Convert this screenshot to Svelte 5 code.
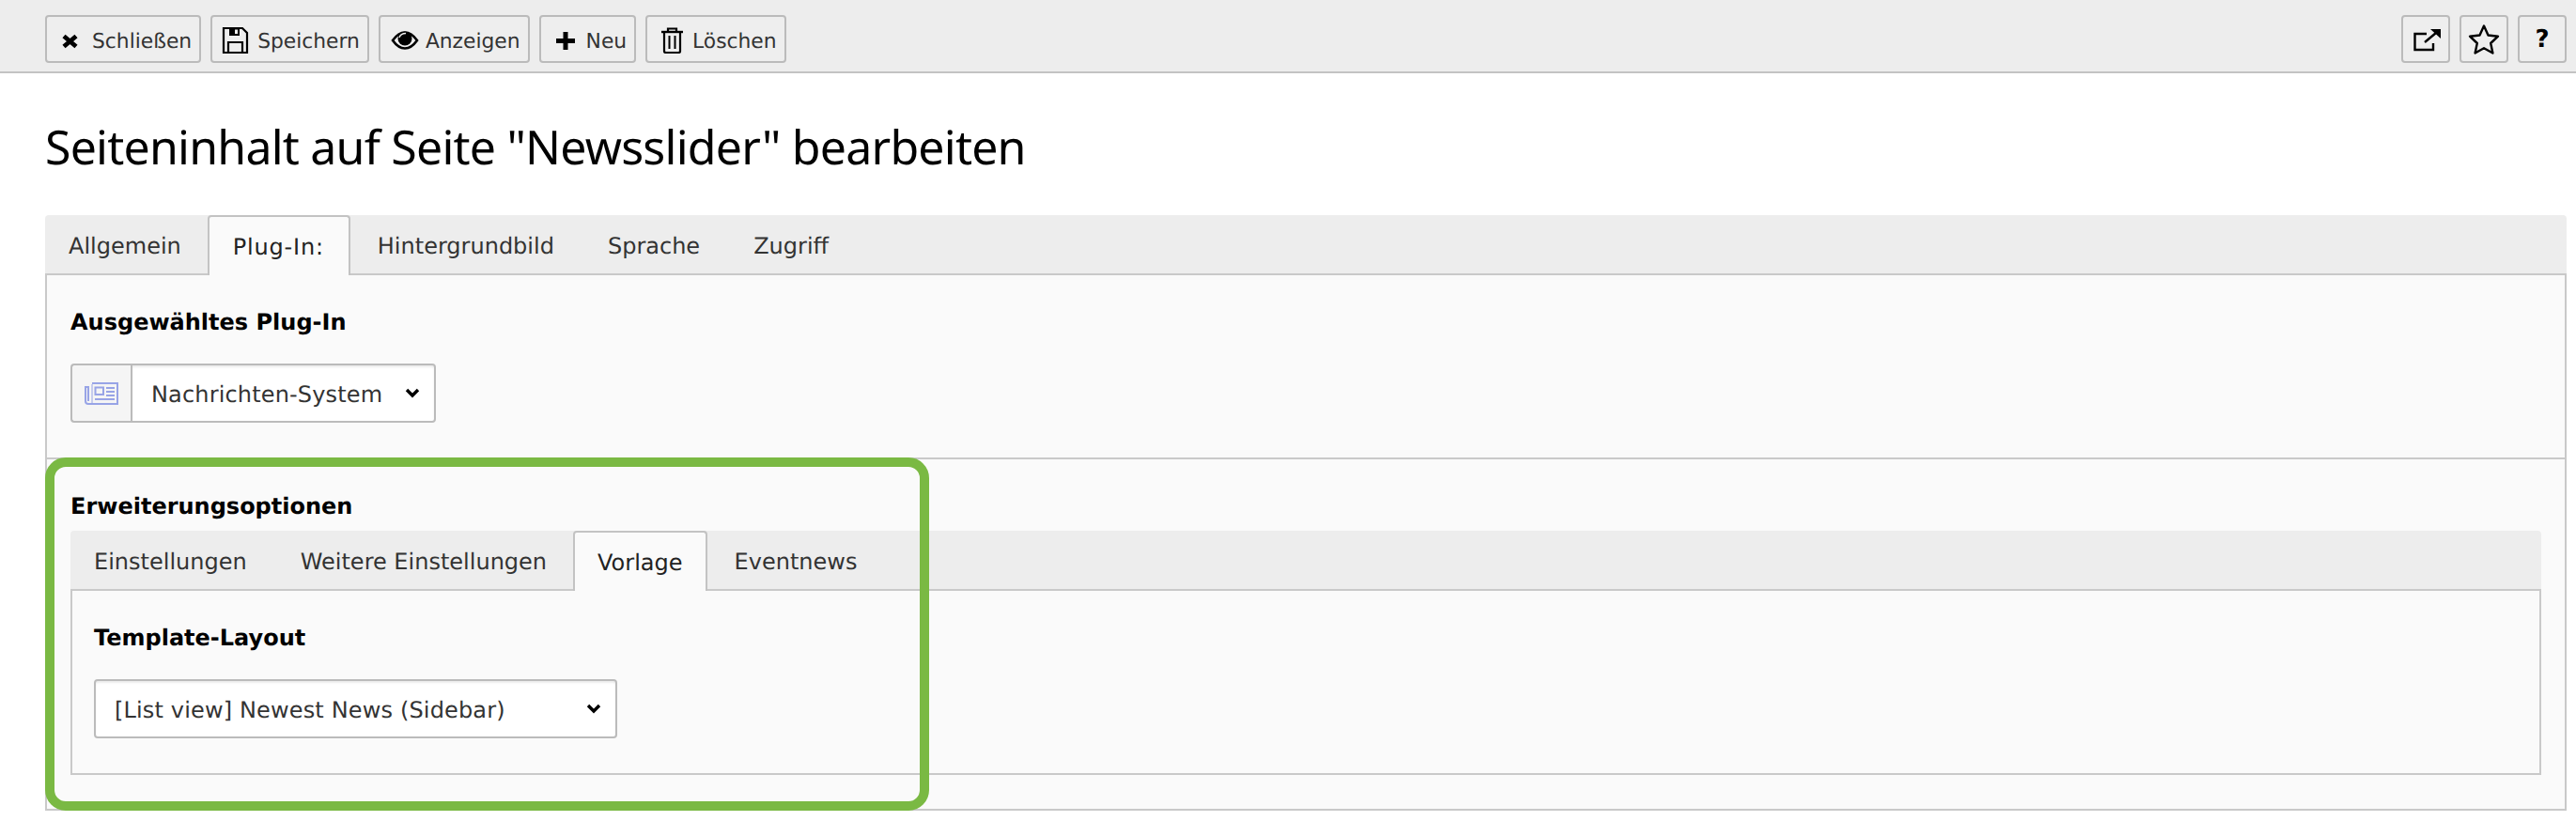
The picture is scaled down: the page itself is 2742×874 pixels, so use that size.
<script lang="ts">
	const leftActions = ['close', 'save', 'view', 'new', 'delete'];
	const labels: Record<string, string> = {
		close: 'Schließen',
		save: 'Speichern',
		view: 'Anzeigen',
		new: 'Neu',
		delete: 'Löschen'
	};
	const mainTabs = ['Allgemein', 'Plug-In:', 'Hintergrundbild', 'Sprache', 'Zugriff'];
	const subTabs = ['Einstellungen', 'Weitere Einstellungen', 'Vorlage', 'Eventnews'];
</script>

<div class="toolbar">
	<div class="group">
		{#each leftActions as action}
			<button class="btn" type="button">
				<svg class="icon" viewBox="0 0 32 32" width="32" height="32">
					{#if action === 'close'}
						<path d="M8 12.500 21 23.500M21 12.500 8 23.500" fill="none" stroke="#000" stroke-width="4.800" />
					{:else if action === 'save'}
						<path d="M2 4H22L27 9V30H2Z" fill="none" stroke="#000" stroke-width="2.200" />
						<path d="M8 4H19V12H8Z" fill="#000" />
						<path d="M14 5.500H17V10H14Z" fill="#eee" />
						<path d="M7 30V19H22V30" fill="none" stroke="#000" stroke-width="2.200" />
					{:else if action === 'view'}
						<path d="M3 17C8 10 12 8.500 16 8.500S24 10 29 17C24 24 20 25.500 16 25.500S8 24 3 17Z" fill="none" stroke="#000" stroke-width="2.600" />
						<circle cx="16" cy="15" r="7.500" fill="#000" />
						<path d="M10 14C11 11 14 9.500 17 9.500" fill="none" stroke="#eee" stroke-width="1.400" />
					{:else if action === 'new'}
						<path d="M6 17.500H26M16 8V27" fill="none" stroke="#000" stroke-width="5" />
					{:else}
						<path d="M5 8H28" fill="none" stroke="#000" stroke-width="2.400" />
						<path d="M12 8V4.500H21V8" fill="none" stroke="#000" stroke-width="2.200" />
						<path d="M8 8V28.500Q8 30 10 30H23Q25 30 25 28.500V8" fill="none" stroke="#000" stroke-width="2.200" />
						<path d="M13.500 12V26M19.500 12V26" fill="none" stroke="#000" stroke-width="2" />
					{/if}
				</svg>
				<span>{labels[action]}</span>
			</button>
		{/each}
	</div>
	<div class="group">
		<button class="btn square" type="button" aria-label="Neues Fenster">
			<svg viewBox="0 0 32 32" width="32" height="32">
				<path d="M24 20V27H4.500V10H17" fill="none" stroke="#000" stroke-width="2.400" />
				<path d="M15 19 27 9" fill="none" stroke="#000" stroke-width="2.400" />
				<path d="M21 5H32V15Z" fill="#000" />
			</svg>
		</button>
		<button class="btn square" type="button" aria-label="Lesezeichen">
			<svg viewBox="0 0 36 36" width="36" height="36">
				<path d="M18 3.500 22.500 13.500 33 14.700 25.200 22 27.400 32.500 18 27.200 8.600 32.500 10.800 22 3 14.700 13.500 13.500Z" fill="none" stroke="#000" stroke-width="2.400" stroke-linejoin="round" />
			</svg>
		</button>
		<button class="btn square help" type="button">?</button>
	</div>
</div>

<main class="page">
	<h1>Seiteninhalt auf Seite "Newsslider" bearbeiten</h1>

	<div class="tabs">
		{#each mainTabs as tab}
			<span class="tab" class:active={tab === 'Plug-In:'} class:spaced={tab === 'Plug-In:'}>{tab}</span>
		{/each}
	</div>

	<div class="panel">
		<section class="section first">
			<h3>Ausgewähltes Plug-In</h3>
			<div class="select-group">
				<span class="addon">
					<svg viewBox="0 0 36 24" width="36" height="24">
						<path d="M8 1H35V23H4Q1 23 1 20V5H4V20" fill="none" stroke="#98a4e6" stroke-width="2" />
						<path d="M8 2V22" fill="none" stroke="#98a4e6" stroke-width="1" />
						<path d="M11.500 5.500H20V13H11.500Z" fill="none" stroke="#98a4e6" stroke-width="2" />
						<path d="M23 6H32M23 10H32M23 14H32M11 18H32" fill="none" stroke="#98a4e6" stroke-width="2" />
					</svg>
				</span>
				<span class="select-wrap plugin">
					<select>
						<option>Nachrichten-System</option>
					</select>
					<svg class="chevron" viewBox="0 0 16 11" width="16" height="11">
						<path d="M2 2 8 8 14 2" fill="none" stroke="#000" stroke-width="3.400" />
					</svg>
				</span>
			</div>
		</section>

		<section class="section second">
			<h3 class="options-title">Erweiterungsoptionen</h3>
			<div class="tabs">
				{#each subTabs as tab}
					<span class="tab" class:active={tab === 'Vorlage'}>{tab}</span>
				{/each}
			</div>
			<div class="panel inner">
				<h3>Template-Layout</h3>
				<span class="select-wrap template">
					<select>
						<option>[List view] Newest News (Sidebar)</option>
					</select>
					<svg class="chevron" viewBox="0 0 16 11" width="16" height="11">
						<path d="M2 2 8 8 14 2" fill="none" stroke="#000" stroke-width="3.400" />
					</svg>
				</span>
			</div>
			<div class="highlight"></div>
		</section>
	</div>
</main>

<style>
	:global(body) {
		background: #fff;
		font-family: 'DejaVu Sans', sans-serif;
		color: #333;
		text-rendering: geometricPrecision;
	}

	.toolbar {
		display: flex;
		justify-content: space-between;
		align-items: center;
		box-sizing: content-box;
		height: 69px;
		padding: 7px 10px 0 48px;
		background: #ededed;
		border-bottom: 2px solid #c3c3c3;
	}

	.group {
		display: flex;
		gap: 10px;
	}

	.btn {
		display: flex;
		align-items: center;
		gap: 6px;
		box-sizing: border-box;
		height: 51px;
		padding: 0 8px 0 10px;
		border: 2px solid #bbb;
		border-radius: 4px;
		background: #eee;
		font: 21.8px 'DejaVu Sans', sans-serif;
		text-rendering: geometricPrecision;
		color: #333;
	}

	.btn span {
		position: relative;
		top: 3px;
	}

	.square {
		justify-content: center;
		width: 52px;
		padding: 0;
	}

	.help {
		font-size: 26px;
		font-weight: 700;
		color: #000;
	}

	.page {
		padding: 0 10px 0 48px;
	}

	h1 {
		margin: 0;
		padding: 41px 0 36px;
		font: 400 50px/74px 'Noto Sans', sans-serif;
		letter-spacing: -0.78px;
		color: #000;
	}

	.tabs {
		display: flex;
		gap: 7px;
		height: 62px;
		background: #ededed;
		border-radius: 4px 4px 0 0;
	}

	.tab {
		box-sizing: border-box;
		height: 62px;
		padding: 0 25px;
		font-size: 24px;
		line-height: 66px;
		color: #333;
	}

	.tab.active {
		position: relative;
		height: 64px;
		margin: 0 -3px 0 -4px;
		padding: 0 24px;
		border: 2px solid #c3c3c3;
		border-bottom: 0;
		border-radius: 4px 4px 0 0;
		background: #fafafa;
		line-height: 64px;
		color: #222;
		z-index: 1;
	}

	.tab.spaced {
		padding: 0 26px 0 25px;
		letter-spacing: 0.8px;
	}

	.panel {
		border: 2px solid #c9c9c9;
		background: #fafafa;
	}

	.section {
		position: relative;
		padding: 0 25px;
	}

	.first {
		padding-top: 33px;
		padding-bottom: 37px;
		border-bottom: 2px solid #c9c9c9;
	}

	.second {
		padding-top: 33px;
		padding-bottom: 36px;
	}

	h3 {
		margin: 0 0 27px;
		font-size: 24px;
		line-height: 34px;
		font-weight: 700;
		color: #000;
	}

	.options-title {
		margin-bottom: 9px;
	}

	.inner {
		padding: 33px 23px 37px;
	}

	.select-group {
		display: flex;
		width: 389px;
		height: 63px;
	}

	.addon {
		display: flex;
		align-items: center;
		justify-content: center;
		box-sizing: border-box;
		width: 64px;
		border: 2px solid #bbb;
		border-right: 0;
		border-radius: 4px 0 0 4px;
		background: #f5f5f5;
	}

	.select-wrap {
		position: relative;
		display: block;
		height: 63px;
	}

	.plugin {
		flex: 1;
	}

	.template {
		width: 557px;
	}

	select {
		appearance: none;
		box-sizing: border-box;
		width: 100%;
		height: 100%;
		padding: 3px 0 0 20px;
		border: 2px solid #bbb;
		border-radius: 4px;
		background: #fff;
		box-shadow: inset 0 2px 2px rgba(0, 0, 0, 0.08);
		font: 24px 'DejaVu Sans', sans-serif;
		letter-spacing: 0.15px;
		text-rendering: geometricPrecision;
		color: #333;
	}

	.plugin select {
		border-radius: 0 4px 4px 0;
	}

	.chevron {
		position: absolute;
		right: 17px;
		top: 26px;
	}

	.highlight {
		position: absolute;
		left: -2px;
		top: -2px;
		width: 941px;
		bottom: -2px;
		box-sizing: border-box;
		border: 10px solid #7ab943;
		border-radius: 22px;
		pointer-events: none;
		z-index: 2;
	}
</style>
